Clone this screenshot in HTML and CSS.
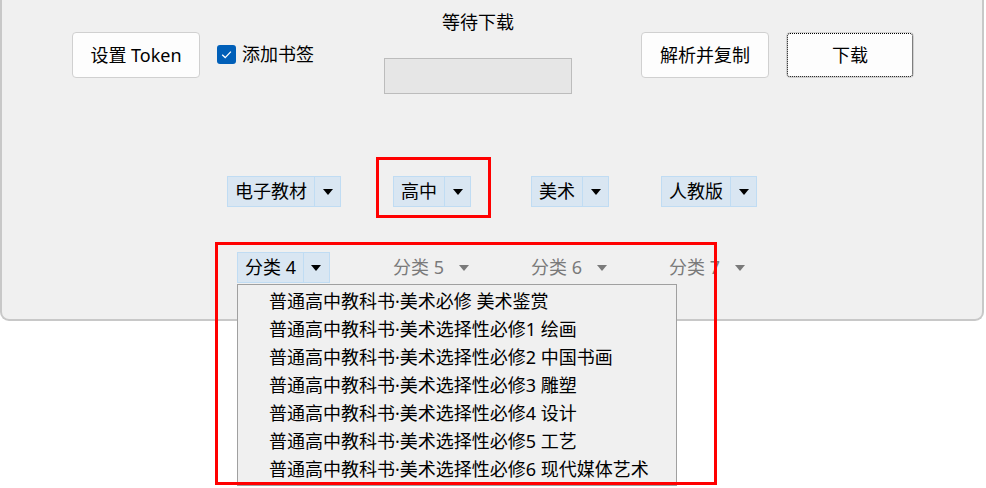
FILE: index.html
```html
<!DOCTYPE html>
<html lang="zh-CN">
<head>
  <meta charset="UTF-8" />
  <meta name="viewport" content="width=device-width, initial-scale=1.0"/>
  <title>教材下载</title>
  <link rel="stylesheet" href="styles.css">
</head>
<body>
  <div class="window">
    <!-- Top toolbar -->
    <div class="toolbar">
      <button class="btn">设置 Token</button>
      <label class="check">
        <span class="check-box">
          <svg viewBox="0 0 19 19" width="19" height="19">
            <path d="M5.2 9.8 L8.2 12.6 L13.9 6.6" fill="none" stroke="#fff" stroke-width="1.3" />
          </svg>
        </span>
        添加书签
      </label>
      <div class="status">
        <div class="status-text">等待下载</div>
        <div class="progress"></div>
      </div>
      <button class="btn btn-parse">解析并复制</button>
      <button class="btn btn-download">下载</button>
    </div>

    <!-- Main filters -->
    <div class="filters">
      <div class="combo"><span class="combo-text">电子教材</span><span class="combo-arrow"></span></div>
      <div class="combo"><span class="combo-text">高中</span><span class="combo-arrow"></span></div>
      <div class="combo"><span class="combo-text">美术</span><span class="combo-arrow"></span></div>
      <div class="combo"><span class="combo-text">人教版</span><span class="combo-arrow"></span></div>
    </div>

    <!-- Category filters -->
    <div class="filters filters-sub">
      <div class="combo"><span class="combo-text">分类 4</span><span class="combo-arrow"></span></div>
      <div class="combo disabled"><span class="combo-text">分类 5</span><span class="combo-arrow"></span></div>
      <div class="combo disabled"><span class="combo-text">分类 6</span><span class="combo-arrow"></span></div>
      <div class="combo disabled"><span class="combo-text">分类 7</span><span class="combo-arrow"></span></div>
    </div>
  </div>

  <!-- Open list of 分类 4 -->
  <ul class="dropdown">
    <li>普通高中教科书·美术必修 美术鉴赏</li>
    <li>普通高中教科书·美术选择性必修1 绘画</li>
    <li>普通高中教科书·美术选择性必修2 中国书画</li>
    <li>普通高中教科书·美术选择性必修3 雕塑</li>
    <li>普通高中教科书·美术选择性必修4 设计</li>
    <li>普通高中教科书·美术选择性必修5 工艺</li>
    <li>普通高中教科书·美术选择性必修6 现代媒体艺术</li>
  </ul>

  <!-- Highlight frames -->
  <div class="mark mark-level"></div>
  <div class="mark mark-list"></div>
</body>
</html>
```

FILE: styles.css
```css
* {
  box-sizing: border-box;
}

body {
  margin: 0;
  background-color: #fff;
  color: #000;
  font-family: "Noto Sans", "Noto Sans CJK SC", sans-serif;
  font-size: 18px;
  position: relative;
  height: 488px;
  overflow: hidden;
}

.window {
  width: 984px;
  height: 321px;
  background-color: #f0f0f0;
  border: 2px solid #c8c8c8;
  border-top: none;
  border-radius: 0 0 9px 9px;
}

/* Toolbar */

.toolbar {
  display: flex;
  align-items: flex-start;
  padding-left: 70px;
}

.btn {
  width: 128px;
  height: 46px;
  margin-top: 32px;
  background-color: #fdfdfd;
  border: 1px solid #d0d0d0;
  border-radius: 4px;
  font-family: inherit;
  font-size: 18px;
  color: #000;
  line-height: 44px;
  padding: 0;
}

.btn-parse {
  margin-left: 69px;
}

.btn-download {
  margin-left: 17px;
  outline: 1px dotted #000;
  outline-offset: -2px;
}

.check {
  display: flex;
  align-items: center;
  gap: 6px;
  width: 167px;
  margin-left: 17px;
  margin-top: 42px;
  line-height: 24px;
}

.check-box {
  width: 19px;
  height: 19px;
  border-radius: 3px;
  background-color: #005fb8;
  display: flex;
}

.status {
  width: 188px;
  display: flex;
  flex-direction: column;
  align-items: center;
}

.status-text {
  margin-top: 10px;
  line-height: 24px;
}

.progress {
  width: 188px;
  height: 36px;
  margin-top: 24px;
  background-color: #e6e6e6;
  border: 1px solid #bcbcbc;
}

/* Combo boxes */

.filters {
  display: flex;
  margin-top: 82px;
  padding-left: 225px;
}

.filters .combo:nth-child(2) {
  margin-left: 52px;
}

.filters .combo:nth-child(3) {
  margin-left: 60px;
}

.filters .combo:nth-child(4) {
  margin-left: 52px;
}

.filters-sub {
  margin-top: 45px;
  padding-left: 235px;
}

.filters-sub .combo:nth-child(2) {
  margin-left: 55px;
}

.filters-sub .combo:nth-child(3),
.filters-sub .combo:nth-child(4) {
  margin-left: 45px;
}

.combo {
  display: flex;
  height: 31px;
  background-color: #d9e6f2;
  border: 1px solid #c0dcf3;
}

.combo-text {
  padding: 0 7px;
  line-height: 29px;
}

.combo-arrow {
  width: 26px;
  border-left: 1px solid #c0dcf3;
  display: flex;
  align-items: center;
  justify-content: center;
}

.combo-arrow::after {
  content: "";
  border-left: 5.5px solid transparent;
  border-right: 5.5px solid transparent;
  border-top: 6px solid #000;
}

.combo.disabled {
  background-color: transparent;
  border-color: transparent;
  color: #7a7a7a;
}

.combo.disabled .combo-arrow {
  border-left-color: transparent;
}

.combo.disabled .combo-arrow::after {
  border-top-color: #7a7a7a;
}

/* Dropdown list */

.dropdown {
  position: absolute;
  left: 237px;
  top: 284px;
  width: 440px;
  margin: 0;
  padding: 2px 0;
  list-style: none;
  background-color: #f0f0f0;
  border: 1px solid #a0a0a0;
}

.dropdown li {
  height: 28px;
  line-height: 28px;
  padding-left: 31px;
  white-space: nowrap;
}

/* Red frames */

.mark {
  position: absolute;
  border: 3px solid #ff0000;
}

.mark-level {
  left: 376px;
  top: 157px;
  width: 115px;
  height: 61px;
}

.mark-list {
  left: 215px;
  top: 242px;
  width: 502px;
  height: 243px;
}
```
